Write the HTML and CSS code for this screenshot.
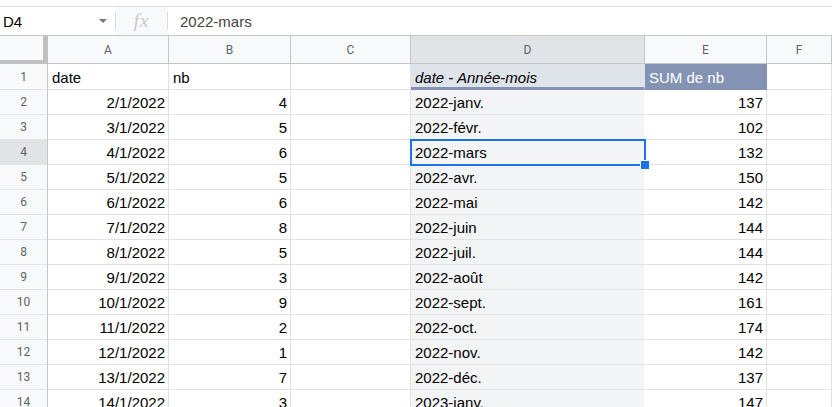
FILE: index.html
```html
<!DOCTYPE html>
<html lang="fr">
<head>
    <meta charset="UTF-8">
    <title>Tableau croisé</title>
    <link rel="stylesheet" href="styles.css">
</head>
<body>
    <div class="formula-bar">
        <div class="name-box">
            <span>D4</span>
            <span class="arrow"></span>
        </div>
        <div class="fx"><i>fx</i></div>
        <div class="formula">2022-mars</div>
    </div>

    <div class="sheet">
        <!-- En-têtes de colonnes -->
        <div class="row head">
            <div class="corner"></div>
            <div class="col-h">A</div>
            <div class="col-h">B</div>
            <div class="col-h">C</div>
            <div class="col-h sel">D</div>
            <div class="col-h">E</div>
            <div class="col-h">F</div>
        </div>

        <div class="row first">
            <div class="row-h">1</div>
            <div class="cell">date</div>
            <div class="cell">nb</div>
            <div class="cell"></div>
            <div class="cell pv-label">date - Année-mois</div>
            <div class="cell pv-sum">SUM de nb</div>
            <div class="cell"></div>
        </div>
        <div class="row">
            <div class="row-h">2</div>
            <div class="cell num">2/1/2022</div>
            <div class="cell num">4</div>
            <div class="cell"></div>
            <div class="cell pv">2022-janv.</div>
            <div class="cell num">137</div>
            <div class="cell"></div>
        </div>
        <div class="row">
            <div class="row-h">3</div>
            <div class="cell num">3/1/2022</div>
            <div class="cell num">5</div>
            <div class="cell"></div>
            <div class="cell pv">2022-févr.</div>
            <div class="cell num">102</div>
            <div class="cell"></div>
        </div>
        <div class="row">
            <div class="row-h sel">4</div>
            <div class="cell num">4/1/2022</div>
            <div class="cell num">6</div>
            <div class="cell"></div>
            <div class="cell pv active">2022-mars<span class="handle"></span></div>
            <div class="cell num">132</div>
            <div class="cell"></div>
        </div>
        <div class="row">
            <div class="row-h">5</div>
            <div class="cell num">5/1/2022</div>
            <div class="cell num">5</div>
            <div class="cell"></div>
            <div class="cell pv">2022-avr.</div>
            <div class="cell num">150</div>
            <div class="cell"></div>
        </div>
        <div class="row">
            <div class="row-h">6</div>
            <div class="cell num">6/1/2022</div>
            <div class="cell num">6</div>
            <div class="cell"></div>
            <div class="cell pv">2022-mai</div>
            <div class="cell num">142</div>
            <div class="cell"></div>
        </div>
        <div class="row">
            <div class="row-h">7</div>
            <div class="cell num">7/1/2022</div>
            <div class="cell num">8</div>
            <div class="cell"></div>
            <div class="cell pv">2022-juin</div>
            <div class="cell num">144</div>
            <div class="cell"></div>
        </div>
        <div class="row">
            <div class="row-h">8</div>
            <div class="cell num">8/1/2022</div>
            <div class="cell num">5</div>
            <div class="cell"></div>
            <div class="cell pv">2022-juil.</div>
            <div class="cell num">144</div>
            <div class="cell"></div>
        </div>
        <div class="row">
            <div class="row-h">9</div>
            <div class="cell num">9/1/2022</div>
            <div class="cell num">3</div>
            <div class="cell"></div>
            <div class="cell pv">2022-août</div>
            <div class="cell num">142</div>
            <div class="cell"></div>
        </div>
        <div class="row">
            <div class="row-h">10</div>
            <div class="cell num">10/1/2022</div>
            <div class="cell num">9</div>
            <div class="cell"></div>
            <div class="cell pv">2022-sept.</div>
            <div class="cell num">161</div>
            <div class="cell"></div>
        </div>
        <div class="row">
            <div class="row-h">11</div>
            <div class="cell num">11/1/2022</div>
            <div class="cell num">2</div>
            <div class="cell"></div>
            <div class="cell pv">2022-oct.</div>
            <div class="cell num">174</div>
            <div class="cell"></div>
        </div>
        <div class="row">
            <div class="row-h">12</div>
            <div class="cell num">12/1/2022</div>
            <div class="cell num">1</div>
            <div class="cell"></div>
            <div class="cell pv">2022-nov.</div>
            <div class="cell num">142</div>
            <div class="cell"></div>
        </div>
        <div class="row">
            <div class="row-h">13</div>
            <div class="cell num">13/1/2022</div>
            <div class="cell num">7</div>
            <div class="cell"></div>
            <div class="cell pv">2022-déc.</div>
            <div class="cell num">137</div>
            <div class="cell"></div>
        </div>
        <div class="row">
            <div class="row-h">14</div>
            <div class="cell num">14/1/2022</div>
            <div class="cell num">3</div>
            <div class="cell"></div>
            <div class="cell pv">2023-janv.</div>
            <div class="cell num">147</div>
            <div class="cell"></div>
        </div>
    </div>
</body>
</html>
```

FILE: styles.css
```css
* {
    margin: 0;
    padding: 0;
    box-sizing: border-box;
}

body {
    font-family: 'Liberation Sans', Arial, sans-serif;
    background: #fff;
    color: #000;
    overflow: hidden;
    padding-top: 6px;
}

/* Barre de formule */
.formula-bar {
    display: flex;
    height: 30px;
    border-top: 1px solid #e0e0e0;
    border-bottom: 1px solid #c4c7c5;
    font-size: 15px;
}

.name-box {
    width: 115px;
    display: flex;
    align-items: center;
    justify-content: space-between;
    padding: 0 8px 0 3px;
}

.arrow {
    width: 0;
    height: 0;
    border-left: 4px solid transparent;
    border-right: 4px solid transparent;
    border-top: 4px solid #777;
}

.fx {
    width: 53px;
    background: #f8f9fa;
    display: flex;
    align-items: center;
    justify-content: center;
    position: relative;
}

.fx::before,
.fx::after {
    content: "";
    position: absolute;
    top: 5px;
    bottom: 5px;
    width: 1px;
    background: #dadce0;
}

.fx::before { left: 0; }
.fx::after { right: 0; }

.fx i {
    font-family: 'Liberation Serif', serif;
    font-size: 19px;
    color: #c8c8c8;
    letter-spacing: 1px;
}

.formula {
    flex: 1;
    display: flex;
    align-items: center;
    padding-left: 12px;
    color: #444;
}

/* Grille */
.row {
    display: grid;
    grid-template-columns: 48px 121px 122px 120px 234px 122px 1fr;
    height: 25px;
}

.row.head {
    height: 28px;
}

.row.first {
    height: 26px;
}

.corner {
    background: #f8f9fa;
    border-right: 4px solid #c0c0c0;
    border-bottom: 4px solid #c0c0c0;
    margin-right: 1px;
    box-shadow: 1px 0 0 #c0c0c0;
}

.col-h,
.row-h {
    background: #f8f9fa;
    color: #5f6368;
    font-family: Roboto, 'Liberation Sans', sans-serif;
    font-size: 12px;
    display: flex;
    align-items: center;
    justify-content: center;
    border-right: 1px solid #c4c7c5;
    border-bottom: 1px solid #c4c7c5;
}

.row-h {
    border-bottom-color: #e1e3e6;
}

.col-h.sel,
.row-h.sel {
    background: #e1e3e6;
}

.cell {
    font-size: 15px;
    display: flex;
    align-items: flex-end;
    padding: 0 3px 3px 4px;
    border-right: 1px solid #e2e2e2;
    border-bottom: 1px solid #e2e2e2;
    white-space: nowrap;
    position: relative;
}

.cell.num {
    justify-content: flex-end;
}

.pv {
    background: #f3f4f6;
    border-right-color: #fff;
}

.pv-label {
    background: #dfe3ea;
    font-style: italic;
    border-bottom: 3px solid #8493b4;
    padding-bottom: 1px;
    border-right-color: #dfe3ea;
}

.pv-sum {
    background: #8493b4;
    color: #fff;
    border-right-color: #8493b4;
    border-bottom-color: #8493b4;
    padding-bottom: 3px;
}

.active {
    outline: 2px solid #1a73e8;
    outline-offset: -1px;
    z-index: 1;
}

.handle {
    position: absolute;
    right: -5px;
    bottom: -5px;
    width: 8px;
    height: 8px;
    background: #1a73e8;
    box-shadow: 0 0 0 1px #fff;
}
```
